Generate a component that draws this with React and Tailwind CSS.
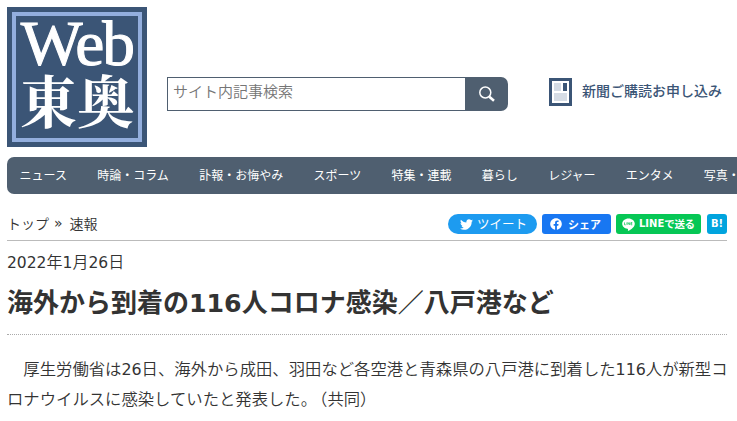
import { FaTwitter, FaFacebook } from "react-icons/fa";

const navItems = [
  "ニュース",
  "時論・コラム",
  "訃報・お悔やみ",
  "スポーツ",
  "特集・連載",
  "暮らし",
  "レジャー",
  "エンタメ",
  "写真・動画",
];

function Num({ children }) {
  return (
    <span className="font-['DejaVu_Sans','Noto_Sans_CJK_JP',sans-serif] text-[0.97em] leading-none">
      {children}
    </span>
  );
}

function Logo() {
  return (
    <div className="size-[140px] shrink-0 bg-[#3b5576] p-[5px]">
      <div className="flex h-full flex-col items-center border-4 border-[#93aedd] text-white">
        <div className="h-[54px] scale-x-[1.04] pt-[2px] font-['Liberation_Serif',serif] text-[63px] leading-[52px] tracking-[-2px] [-webkit-text-stroke:1px_white]">
          Web
        </div>
        <div className="h-[58px] font-['Noto_Serif_CJK_JP','Noto_Sans_CJK_JP',serif] text-[57px] leading-[56px] font-bold whitespace-nowrap">
          東奥
        </div>
      </div>
    </div>
  );
}

function SearchBox() {
  return (
    <div className="mt-[70px] ml-5 flex h-[34px] w-[341px] shrink-0">
      <input
        type="text"
        placeholder="サイト内記事検索"
        className="w-[299px] border border-[#4f5f70] pb-[5px] pl-[5px] text-[15px] font-[350] outline-none placeholder:text-[#757575]"
      />
      <button className="flex flex-1 items-center justify-center rounded-r-[7px] bg-[#4f5f70]">
        <svg width="18" height="18" viewBox="0 0 18 18" fill="none" stroke="#fff">
          <circle cx="7.3" cy="7.5" r="5.5" strokeWidth="1.5" />
          <path d="M11.3 11.7L16 15.7" strokeWidth="2.6" />
        </svg>
      </button>
    </div>
  );
}

export default function App() {
  return (
    <div className="h-[421px] w-[737px] overflow-hidden bg-white pt-[7px] pl-[7px] font-['Noto_Sans_CJK_JP',sans-serif] text-[#333] [text-spacing-trim:space-all]">
      <header className="flex h-[150px]">
        <Logo />
        <SearchBox />
        <a className="mt-[71px] ml-[41px] flex h-7 shrink-0 items-center text-[14px] font-medium text-[#3b5576]">
          <svg width="23" height="28" viewBox="0 0 23 28" className="mr-[10px]">
            <path fill="#3b5576" d="M0 0h23v28H0z" />
            <path fill="#fff" d="M3 3h17v22H3z" />
            <path fill="#d5dce5" d="M5 5h7v8H5zM5 15h13v8H5z" />
            <path fill="#3b5576" d="M14 5h4v8h-4z" />
          </svg>
          <span className="pb-[3px] whitespace-nowrap">新聞ご購読お申し込み</span>
        </a>
      </header>

      <nav className="flex h-[37px] gap-[30.3px] rounded-l-[7px] bg-[#4f5f70] pl-[12.5px] text-[12px] leading-[36px] whitespace-nowrap text-white">
        {navItems.map((item) => (
          <a key={item} className="shrink-0">
            {item}
          </a>
        ))}
      </nav>

      <main className="w-[720px]">
        <div className="flex h-[47px] items-end justify-between border-b border-[#bbb] pb-[6px]">
          <div className="flex h-[22px] items-center text-[14px] font-[350] whitespace-nowrap">
            <span>トップ</span>
            <span className="mr-[7px] ml-[5px] font-['DejaVu_Sans',sans-serif] text-[14px] font-normal">»</span>
            <span>速報</span>
          </div>
          <div className="flex h-5 items-center leading-5 whitespace-nowrap text-white">
            <a className="mr-[5px] flex h-5 w-[89px] items-center rounded-full bg-[#1d9bf0] pl-3 text-[12.5px]">
              <FaTwitter className="mr-1 size-[13px]" />
              ツイート
            </a>
            <a className="mr-[5px] flex h-5 w-[69px] items-center rounded-[3px] bg-[#1877f2] pl-2 text-[11px] font-bold">
              <FaFacebook className="mr-[6px] size-3" />
              シェア
            </a>
            <a className="mr-[6px] flex h-5 w-[85px] items-center rounded-[3px] bg-[#06c755] pl-[6px] text-[10px] font-bold">
              <svg width="13" height="13" viewBox="0 0 13 13" className="mr-1">
                <path
                  fill="#fff"
                  d="M6.5.5C3 .5.2 2.8.2 5.7c0 2.6 2.2 4.7 5.3 5.1.7.1.5.7.4 1.7 0 .3.2.5.6.3 3.1-1.7 6.3-4 6.3-7.1C12.8 2.8 10 .5 6.5.5z"
                />
                <path
                  stroke="#06c755"
                  strokeWidth=".7"
                  fill="none"
                  d="M2.5 4.4v2.4h1.3M4.9 4.4v2.4M6 6.8V4.5l1.6 2.2V4.4M10.3 4.5H8.9v2.3h1.4M8.9 5.6h1.3"
                />
              </svg>
              <span className="font-['DejaVu_Sans',sans-serif]">LINE</span>
              <span className="text-[10.5px] tracking-[-0.4px]">で送る</span>
            </a>
            <a className="h-5 w-5 rounded-[3px] bg-[#00a4de] text-center font-['DejaVu_Sans',sans-serif] text-[10px] font-bold">
              B!
            </a>
          </div>
        </div>

        <p className="mt-2 h-[26px] text-[16px] leading-6 font-[350] [&>span]:font-normal">
          <Num>2022</Num>年<Num>1</Num>月<Num>26</Num>日
        </p>
        <h1 className="h-[60px] border-b border-dotted border-[#aaa] pt-[6px] text-[26px] leading-[40px] font-bold whitespace-nowrap">
          海外から到着の<Num>116</Num>人コロナ感染／八戸港など
        </h1>
        <p className="pt-[18px] text-[16.35px] leading-[30px] font-[350] whitespace-nowrap [&>span]:font-normal">
          {"　厚生労働省は"}
          <Num>26</Num>日、海外から成田、羽田など各空港と青森県の八戸港に到着した<Num>116</Num>人が新型コ
          <br />
          ロナウイルスに感染していたと発表した。
          <b className="-ml-[6px] font-[350]">（共同）</b>
        </p>
      </main>
    </div>
  );
}
